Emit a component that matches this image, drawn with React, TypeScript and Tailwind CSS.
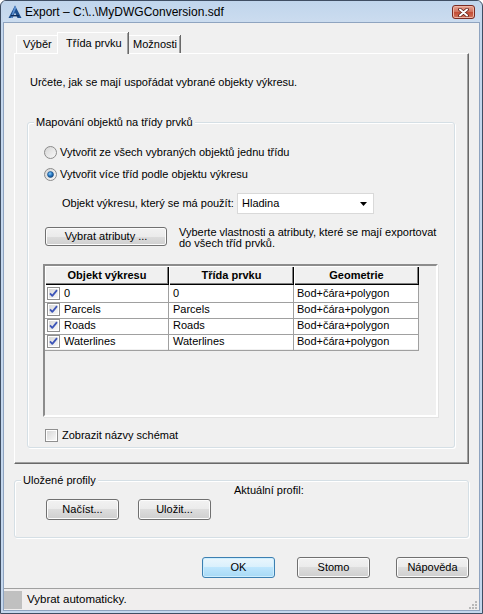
import type { ReactNode } from 'react'

const btn =
  'flex items-center justify-center rounded-[3px] border border-[#707070] bg-[linear-gradient(to_bottom,#f2f2f2_0%,#ebebeb_50%,#dddddd_50%,#cfcfcf_100%)] shadow-[inset_0_0_0_1px_#fcfcfc] text-[11px] leading-none'

const okBtn =
  'flex items-center justify-center rounded-[3px] border border-[#3c7fb1] bg-[linear-gradient(to_bottom,#eaf6fd_0%,#d9f0fc_50%,#bee6fd_50%,#a7d9f5_100%)] shadow-[inset_0_0_0_1px_#cdeefe] text-[11px] leading-none'

function Radio({ checked = false }: { checked?: boolean }) {
  return (
    <svg width="13" height="13" viewBox="0 0 13 13" className="shrink-0">
      <defs>
        <linearGradient id={checked ? 'rg1' : 'rg0'} x1="0" y1="0" x2="1" y2="1">
          <stop offset="0" stopColor="#d4d4d4" />
          <stop offset="1" stopColor="#fafafa" />
        </linearGradient>
        <radialGradient id="rdot" cx="0.4" cy="0.35" r="0.7">
          <stop offset="0" stopColor="#8fd0fb" />
          <stop offset="0.5" stopColor="#2a7bc5" />
          <stop offset="1" stopColor="#0d3f78" />
        </radialGradient>
      </defs>
      <circle cx="6.5" cy="6.5" r="6" fill={`url(#${checked ? 'rg1' : 'rg0'})`} stroke="#8b8b8b" />
      {checked && <circle cx="6.5" cy="6.5" r="3" fill="url(#rdot)" stroke="#1b4f85" strokeWidth="0.6" />}
    </svg>
  )
}

function Check({ checked = false }: { checked?: boolean }) {
  return (
    <svg width="13" height="13" viewBox="0 0 13 13" className="shrink-0">
      <defs>
        <linearGradient id="cbg" x1="0" y1="0" x2="1" y2="1">
          <stop offset="0" stopColor="#d8d8d8" />
          <stop offset="1" stopColor="#f8f8f8" />
        </linearGradient>
      </defs>
      <rect x="0.5" y="0.5" width="12" height="12" fill="#fff" stroke="#8f8f8f" />
      <rect x="2" y="2" width="9" height="9" fill="url(#cbg)" />
      {checked && (
        <path d="M3 6.3 L5.3 8.8 L10 3.2" fill="none" stroke="#3d55b8" strokeWidth="1.8" strokeLinejoin="round" />
      )}
    </svg>
  )
}

function GroupBox({ label, className, children }: { label: string; className: string; children: ReactNode }) {
  return (
    <div
      className={`relative rounded-[3px] border border-[#d5dfe5] shadow-[inset_1px_1px_0_#fff,1px_1px_0_#fff] ${className}`}
    >
      <span className="absolute -top-[7px] left-[6px] bg-[#f0f0f0] px-[2px] leading-[13px]">{label}</span>
      {children}
    </div>
  )
}

const rows = ['0', 'Parcels', 'Roads', 'Waterlines']

const headCell =
  'flex items-center justify-center bg-[#f0f0f0] font-bold shadow-[inset_1px_1px_0_#fff,inset_-1px_-1px_0_#000,inset_-2px_-2px_0_#808080]'

export default function App() {
  return (
    <div className="flex h-[614px] w-[483px] flex-col overflow-hidden rounded-t-[6px] border border-[#3f4e63] bg-[#c4d7ed] px-[2px] pb-[2px] font-['Liberation_Sans',Arial,sans-serif] text-[11px] text-black">
      {/* title bar */}
      <div className="flex h-[21px] shrink-0 items-center bg-[linear-gradient(to_bottom,#c0d5ec,#cbdcef)]">
        <svg width="14" height="14" viewBox="0 0 14 14" className="ml-[5px] shrink-0">
          <polygon points="7,0.5 13.5,13 9.5,13 7,7.5 4.5,13 0.5,13" fill="#1d4f8f" />
          <polygon points="7,0.5 8.3,3 5.5,9 4.5,13 2.5,13" fill="#5b8fd0" />
          <rect x="3" y="10" width="8" height="1.4" fill="#0f2e5c" />
        </svg>
        <span className="ml-[3px] text-[12px] leading-none">Export – C:\..\MyDWGConversion.sdf</span>
        <div className="ml-auto mr-[5px] mt-[1px] flex h-[14px] w-[23px] items-center justify-center rounded-[3px] border border-[#7a2a22] bg-[linear-gradient(to_bottom,#e8a493,#d0705c_50%,#c24a33_50%,#d1745c)] shadow-[inset_0_0_0_1px_#eeb5a5]">
          <svg width="11" height="9" viewBox="0 0 11 9">
            <path d="M2 1.5 L9 7.5 M9 1.5 L2 7.5" stroke="#5b1e17" strokeWidth="3.6" strokeLinecap="round" />
            <path d="M2 1.5 L9 7.5 M9 1.5 L2 7.5" stroke="#ffffff" strokeWidth="2" strokeLinecap="round" />
          </svg>
        </div>
      </div>

      {/* client */}
      <div className="flex flex-1 flex-col border border-[#8fa4c0] bg-[#f0f0f0]">
        <div className="px-[10px] pt-[9px]">
          {/* tabs */}
          <div className="flex h-[21px] items-end pl-[2px]">
            <div className="flex h-[18px] w-[41px] items-center border-l border-t border-white pl-[6px]">Výběr</div>
            <div className="relative z-10 -mb-[1px] flex h-[22px] w-[71px] items-center border-l border-t border-white bg-[#f0f0f0] pl-[8px] shadow-[inset_-1px_0_0_#a0a0a0,1px_0_0_#696969]">
              Třída prvku
            </div>
            <div className="flex h-[18px] w-[52px] items-center border-t border-white pl-[5px] shadow-[inset_-1px_0_0_#a0a0a0,1px_0_0_#696969]">
              Možnosti
            </div>
          </div>

          {/* tab panel */}
          <div className="flex h-[411px] flex-col border border-b-[#696969] border-l-white border-r-[#696969] border-t-white shadow-[inset_-1px_-1px_0_#a0a0a0]">
            <p className="ml-[15px] mt-[22px] leading-[13px]">Určete, jak se mají uspořádat vybrané objekty výkresu.</p>

            <GroupBox label="Mapování objektů na třídy prvků" className="ml-[12px] mt-[33px] flex h-[326px] w-[428px] flex-col">
              <div className="mt-[23px] flex h-[13px] items-center gap-[3px] pl-[16px]">
                <Radio />
                <span>Vytvořit ze všech vybraných objektů jednu třídu</span>
              </div>
              <div className="mt-[9px] flex h-[13px] items-center gap-[3px] pl-[16px]">
                <Radio checked />
                <span>Vytvořit více tříd podle objektu výkresu</span>
              </div>

              <div className="mt-[12px] flex h-[21px] items-center pl-[34px]">
                <span className="w-[175px]">Objekt výkresu, který se má použít:</span>
                <div className="flex h-[21px] w-[137px] items-center border border-[#d9d9d9] bg-white pl-[4px] pr-[6px]">
                  <span>Hladina</span>
                  <svg width="7" height="4" viewBox="0 0 7 4" className="ml-auto">
                    <polygon points="0,0 7,0 3.5,4" fill="#000" />
                  </svg>
                </div>
              </div>

              <div className="mt-[13px] flex items-start pl-[17px]">
                <div className={`${btn} h-[19px] w-[122px] shrink-0`}>Vybrat atributy ...</div>
                <p className="ml-[12px] leading-[11px]">
                  Vyberte vlastnosti a atributy, které se mají exportovat
                  <br />
                  do všech tříd prvků.
                </p>
              </div>

              {/* list view */}
              <div className="ml-[15px] mt-[15px] h-[153px] w-[395px] border-2 border-b-white border-l-[#8c8c8c] border-r-white border-t-[#8c8c8c] bg-[#f0f0f0] shadow-[1px_1px_0_#e3e3e3]">
                <div className="grid h-[19px] w-[374px] grid-cols-[124px_125px_125px]">
                  <div className={headCell}>Objekt výkresu</div>
                  <div className={headCell}>Třída prvku</div>
                  <div className={headCell}>Geometrie</div>
                </div>
                {rows.map((r) => (
                  <div key={r} className="grid h-[16px] w-[374px] grid-cols-[124px_125px_125px] bg-white">
                    <div className="flex items-center gap-[4px] border-b border-r border-[#a0a0a0] pl-[2px]">
                      <Check checked />
                      <span>{r}</span>
                    </div>
                    <div className="flex items-center border-b border-r border-[#a0a0a0] pl-[4px]">{r}</div>
                    <div className="flex items-center border-b border-r border-[#a0a0a0] pl-[3px]">Bod+čára+polygon</div>
                  </div>
                ))}
              </div>

              <div className="ml-[17px] mt-[12px] flex h-[13px] items-center gap-[4px]">
                <Check />
                <span>Zobrazit názvy schémat</span>
              </div>
            </GroupBox>
          </div>

          <GroupBox label="Uložené profily" className="mt-[16px] flex h-[58px] items-start">
            <div className={`${btn} ml-[31px] mt-[18px] h-[21px] w-[73px]`}>Načíst...</div>
            <div className={`${btn} ml-[19px] mt-[18px] h-[21px] w-[73px]`}>Uložit...</div>
            <span className="ml-[23px] mt-[3px] leading-[13px]">Aktuální profil:</span>
          </GroupBox>
        </div>

        {/* dialog buttons */}
        <div className="mt-[19px] flex justify-end pr-[10px]">
          <div className={`${okBtn} h-[21px] w-[73px]`}>OK</div>
          <div className={`${btn} ml-[22px] h-[21px] w-[73px]`}>Stomo</div>
          <div className={`${btn} ml-[26px] h-[21px] w-[73px]`}>Nápověda</div>
        </div>

        {/* status bar */}
        <div className="mt-auto flex h-[22px] items-center border-t border-[#a0a0a0] bg-[#f0eeee]">
          <div className="h-[18px] w-[18px] bg-[#c0c0c0]" />
          <span className="ml-[5px] text-[11.5px]">Vybrat automaticky.</span>
          <svg width="11" height="11" viewBox="0 0 11 11" className="ml-auto mr-[1px] mt-auto">
            <g fill="#b8b8b8">
              <rect x="8" y="2" width="2" height="2" />
              <rect x="5" y="5" width="2" height="2" />
              <rect x="8" y="5" width="2" height="2" />
              <rect x="2" y="8" width="2" height="2" />
              <rect x="5" y="8" width="2" height="2" />
              <rect x="8" y="8" width="2" height="2" />
            </g>
          </svg>
        </div>
      </div>
    </div>
  )
}
